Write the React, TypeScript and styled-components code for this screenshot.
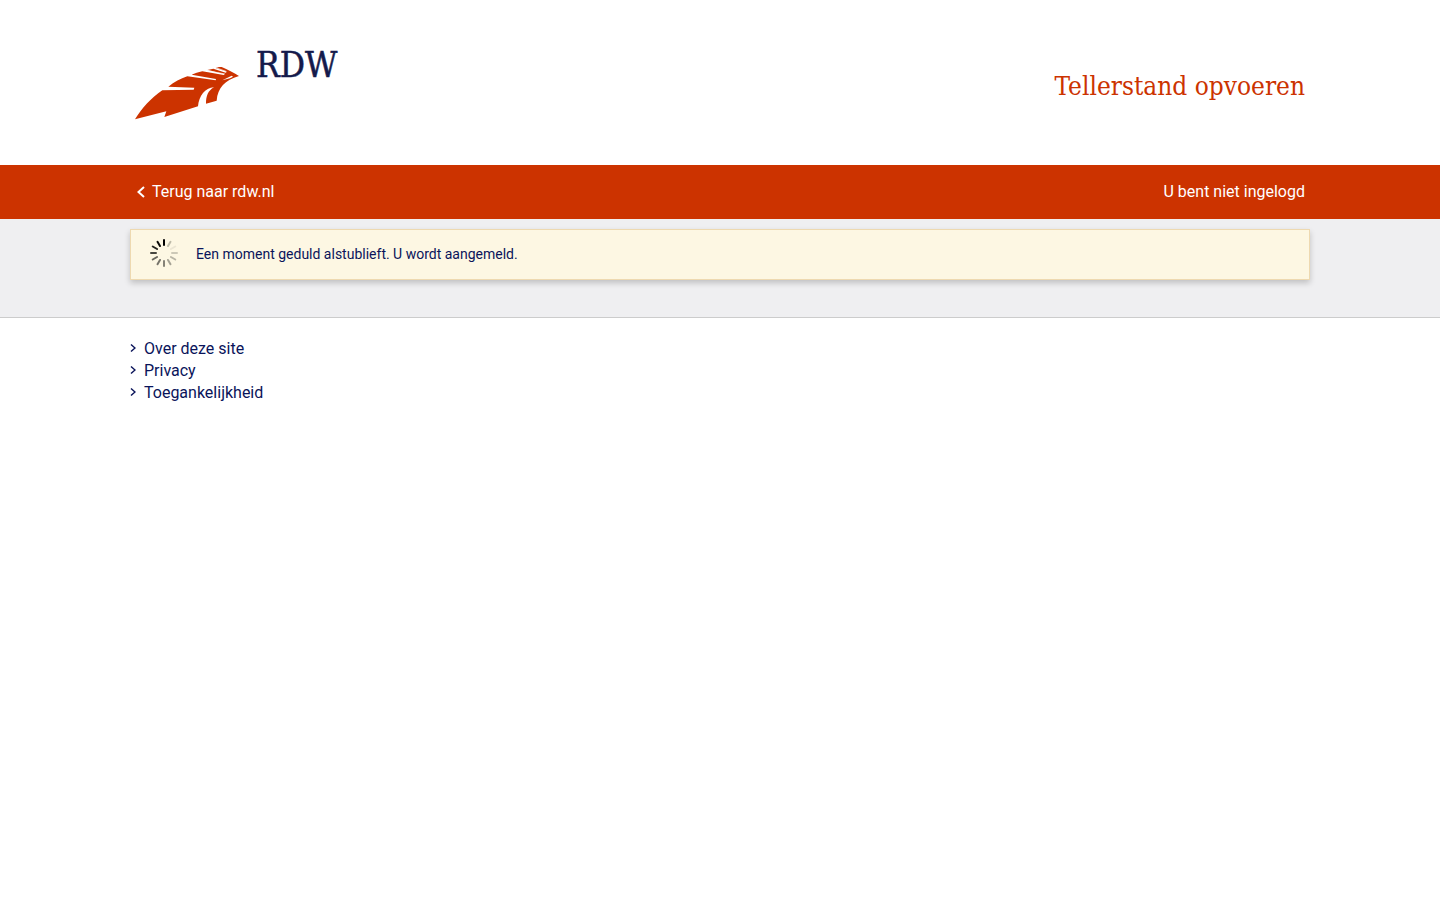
import React from "react";
import styled, { createGlobalStyle } from "styled-components";

const GlobalStyle = createGlobalStyle`
  *, *::before, *::after { box-sizing: border-box; }
  body {
    margin: 0;
    background: #fff;
    color: #0a145a;
    font-family: Roboto, "Liberation Sans", sans-serif;
    font-size: 16px;
    line-height: 22px;
  }
`;

const Container = styled.div`
  width: 100%;
  max-width: 1180px;
  margin: 0 auto;
`;

const HeaderRow = styled(Container)`
  display: flex;
  align-items: flex-start;
  justify-content: space-between;
  min-height: 165px;
  padding: 46px 5px 0;
`;

const LogoLink = styled.a`
  display: block;
  svg { display: block; }
`;

const Title = styled.h1`
  margin: 24px 0 0;
  color: #cc3300;
  font-family: "Roboto Slab", "DejaVu Serif Condensed", "DejaVu Serif", serif;
  font-size: 26px;
  font-weight: 400;
  line-height: 32px;
`;

const NavBar = styled.nav`
  background: #cc3300;
  color: #fff;
`;

const NavRow = styled(Container)`
  display: flex;
  align-items: center;
  justify-content: space-between;
  min-height: 54px;
  padding: 0 5px;
`;

const BackLink = styled.a`
  display: flex;
  align-items: center;
  gap: 5px;
  color: #fff;
  text-decoration: none;
`;

const Main = styled.main`
  padding: 10px 0 37px;
  border-bottom: 1px solid #ccc;
  background: #efeff1;
`;

const Notice = styled(Container)`
  display: flex;
  align-items: center;
  gap: 18px;
  min-height: 51px;
  padding: 0 19px 2px;
  border: 1px solid #eed9b0;
  background: #fdf7e3;
  box-shadow: 0 3px 6px rgba(0, 0, 0, 0.2);
  font-size: 14px;
  line-height: 20px;
`;

const FooterList = styled.ul`
  margin: 0;
  padding: 20px 0;
  list-style: none;
`;

const FooterItem = styled.li`
  display: flex;
`;

const FooterLink = styled.a`
  display: flex;
  align-items: center;
  gap: 8px;
  color: #0a145a;
  text-decoration: none;
`;

const Logo = () => (
  <svg width="206" height="76" viewBox="0 0 206 76" role="img" aria-label="RDW">
    <g transform="translate(-10 -6) scale(0.33333)">
      <path
        fill="#cc3300"
        d="M30 238C50 205 78 174 112 151L206 149L208 143L130 140C148 126 166 116 187 109L272 121L273 117L200 104C209 100 220 97 232 94L296 105L298 102L247 90L265 86L302 98L306 95L272 84L282 81L290 81C308 88 326 98 342 108C300 121 278 143 275 182L243 191C243 168 249 152 267 142C240 144 222 168 219 199L118 231L124 214Z"
      />
      <path d="M247 91L278 98L300 102M275 84L303 94" stroke="#fff" strokeWidth="2" fill="none" />
      <path d="M292 121L320 107L324 110L315 115Z" fill="#fff" />
    </g>
    <text
      x="121"
      y="31"
      fill="#141a4b"
      stroke="#141a4b"
      strokeWidth="0.5"
      fontFamily="'Roboto Slab', 'DejaVu Serif Condensed', 'DejaVu Serif', serif"
      fontSize="35"
    >
      RDW
    </text>
  </svg>
);

const Chevron = ({ back = false }: { back?: boolean }) =>
  back ? (
    <svg width="12" height="14" viewBox="0 0 12 14" aria-hidden="true">
      <path d="M9 2L3.5 7L9 12" fill="none" stroke="#fff" strokeWidth="2" />
    </svg>
  ) : (
    <svg width="6" height="12" viewBox="0 0 6 12" aria-hidden="true">
      <path d="M1 1.5L5 5L1 8.5" fill="none" stroke="#0a145a" strokeWidth="1.5" />
    </svg>
  );

const spokes = [
  "#000", "#bebba9", "#ece6d3", "#ccc8b7", "#b9b5a6", "#a5a294",
  "#858277", "#77746a", "#68665d", "#47463f", "#24231f", "#0b0b09",
];

const Spinner = () => (
  <svg width="28" height="32" viewBox="0 0 28 32" aria-hidden="true">
    {spokes.map((color, i) => (
      <path
        key={i}
        d="M14 2V7"
        stroke={color}
        strokeWidth="2"
        strokeLinecap="round"
        transform={`rotate(${i * 30} 14 15)`}
      />
    ))}
  </svg>
);

const links = ["Over deze site", "Privacy", "Toegankelijkheid"];

export default function App() {
  return (
    <>
      <GlobalStyle />
      <header>
        <HeaderRow>
          <LogoLink href="#"><Logo /></LogoLink>
          <Title>Tellerstand opvoeren</Title>
        </HeaderRow>
        <NavBar>
          <NavRow>
            <BackLink href="#"><Chevron back />Terug naar rdw.nl</BackLink>
            <span>U bent niet ingelogd</span>
          </NavRow>
        </NavBar>
      </header>
      <Main>
        <Notice role="status">
          <Spinner />
          <span>Een moment geduld alstublieft. U wordt aangemeld.</span>
        </Notice>
      </Main>
      <footer>
        <Container>
          <FooterList>
            {links.map((label) => (
              <FooterItem key={label}>
                <FooterLink href="#"><Chevron />{label}</FooterLink>
              </FooterItem>
            ))}
          </FooterList>
        </Container>
      </footer>
    </>
  );
}
